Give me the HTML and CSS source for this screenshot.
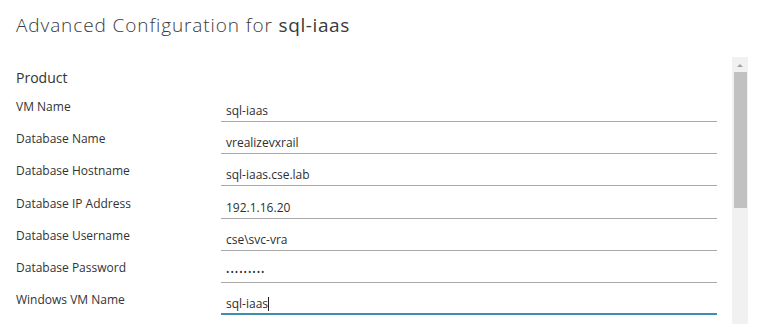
FILE: index.html
```html
<!DOCTYPE html>
<html>
<head>
<meta charset="utf-8">
<link rel="stylesheet" href="styles.css">
</head>
<body>
<div class="page">
  <h1 class="title">Advanced Configuration for <span class="title-name">sql-iaas</span></h1>
  <div class="scroll-area">
    <div class="content">
      <h2 class="section">Product</h2>
      <div class="form">
        <div class="row"><div class="label">VM Name</div><div class="field">sql-iaas</div></div>
        <div class="row"><div class="label">Database Name</div><div class="field">vrealizevxrail</div></div>
        <div class="row"><div class="label">Database Hostname</div><div class="field">sql-iaas.cse.lab</div></div>
        <div class="row"><div class="label">Database IP Address</div><div class="field">192.1.16.20</div></div>
        <div class="row"><div class="label">Database Username</div><div class="field">cse\svc-vra</div></div>
        <div class="row"><div class="label">Database Password</div><div class="field password">•••••••••</div></div>
        <div class="row"><div class="label">Windows VM Name</div><div class="field focused">sql-iaas<span class="caret"></span></div></div>
      </div>
    </div>
    <div class="scrollbar">
      <div class="arrow"></div>
      <div class="thumb"></div>
    </div>
  </div>
</div>
</body>
</html>
```

FILE: styles.css
```css
html, body {
  margin: 0;
  padding: 0;
  background: #ffffff;
}
body {
  font-family: "Open Sans", "DejaVu Sans", sans-serif;
  color: #333333;
  width: 760px;
  height: 324px;
  overflow: hidden;
}
.page {
  display: flex;
  flex-direction: column;
}
.title {
  margin: 0;
  padding: 12px 0 0 16px;
  height: 57px;
  box-sizing: border-box;
  font-size: 19px;
  font-weight: 300;
  letter-spacing: 0.9px;
  color: #3a3a3a;
  line-height: 26px;
}
.title-name {
  font-weight: 400;
  letter-spacing: 0.6px;
  color: #3a3a3a;
}
.scroll-area {
  display: flex;
  height: 267px;
  width: 748px;
}
.content {
  flex: 1;
  padding: 10px 15px 0 16px;
}
.section {
  margin: 0;
  font-size: 14px;
  font-weight: 400;
  line-height: 22px;
  height: 22px;
  color: #333;
}
.form {
  display: flex;
  flex-direction: column;
}
.row {
  display: grid;
  grid-template-columns: 205px 496px;
  height: 32.2px;
}
.label {
  font-size: 12px;
  padding-top: 10px;
  line-height: 16px;
  color: #333;
}
.field {
  font-size: 12px;
  border-bottom: 1px solid #a9a9a9;
  padding: 14px 0 0 5px;
  line-height: 16px;
  box-sizing: border-box;
  height: 33px;
  color: #2e2e2e;
}
.password {
  font-size: 9px;
  letter-spacing: 1px;
  line-height: 16px;
}
.focused {
  border-bottom: 2px solid #3c8fb3;
}
.caret {
  display: inline-block;
  width: 1px;
  height: 14px;
  background: #222;
  vertical-align: -3px;
}
.scrollbar {
  width: 17px;
  background: #f1f1f1;
  display: flex;
  flex-direction: column;
  align-items: center;
}
.arrow {
  margin-top: 7px;
  width: 0;
  height: 0;
  border-left: 3px solid transparent;
  border-right: 3px solid transparent;
  border-bottom: 3px solid #a3a3a3;
}
.thumb {
  margin-top: 5px;
  width: 13px;
  height: 136px;
  background: #c1c1c1;
}
```
